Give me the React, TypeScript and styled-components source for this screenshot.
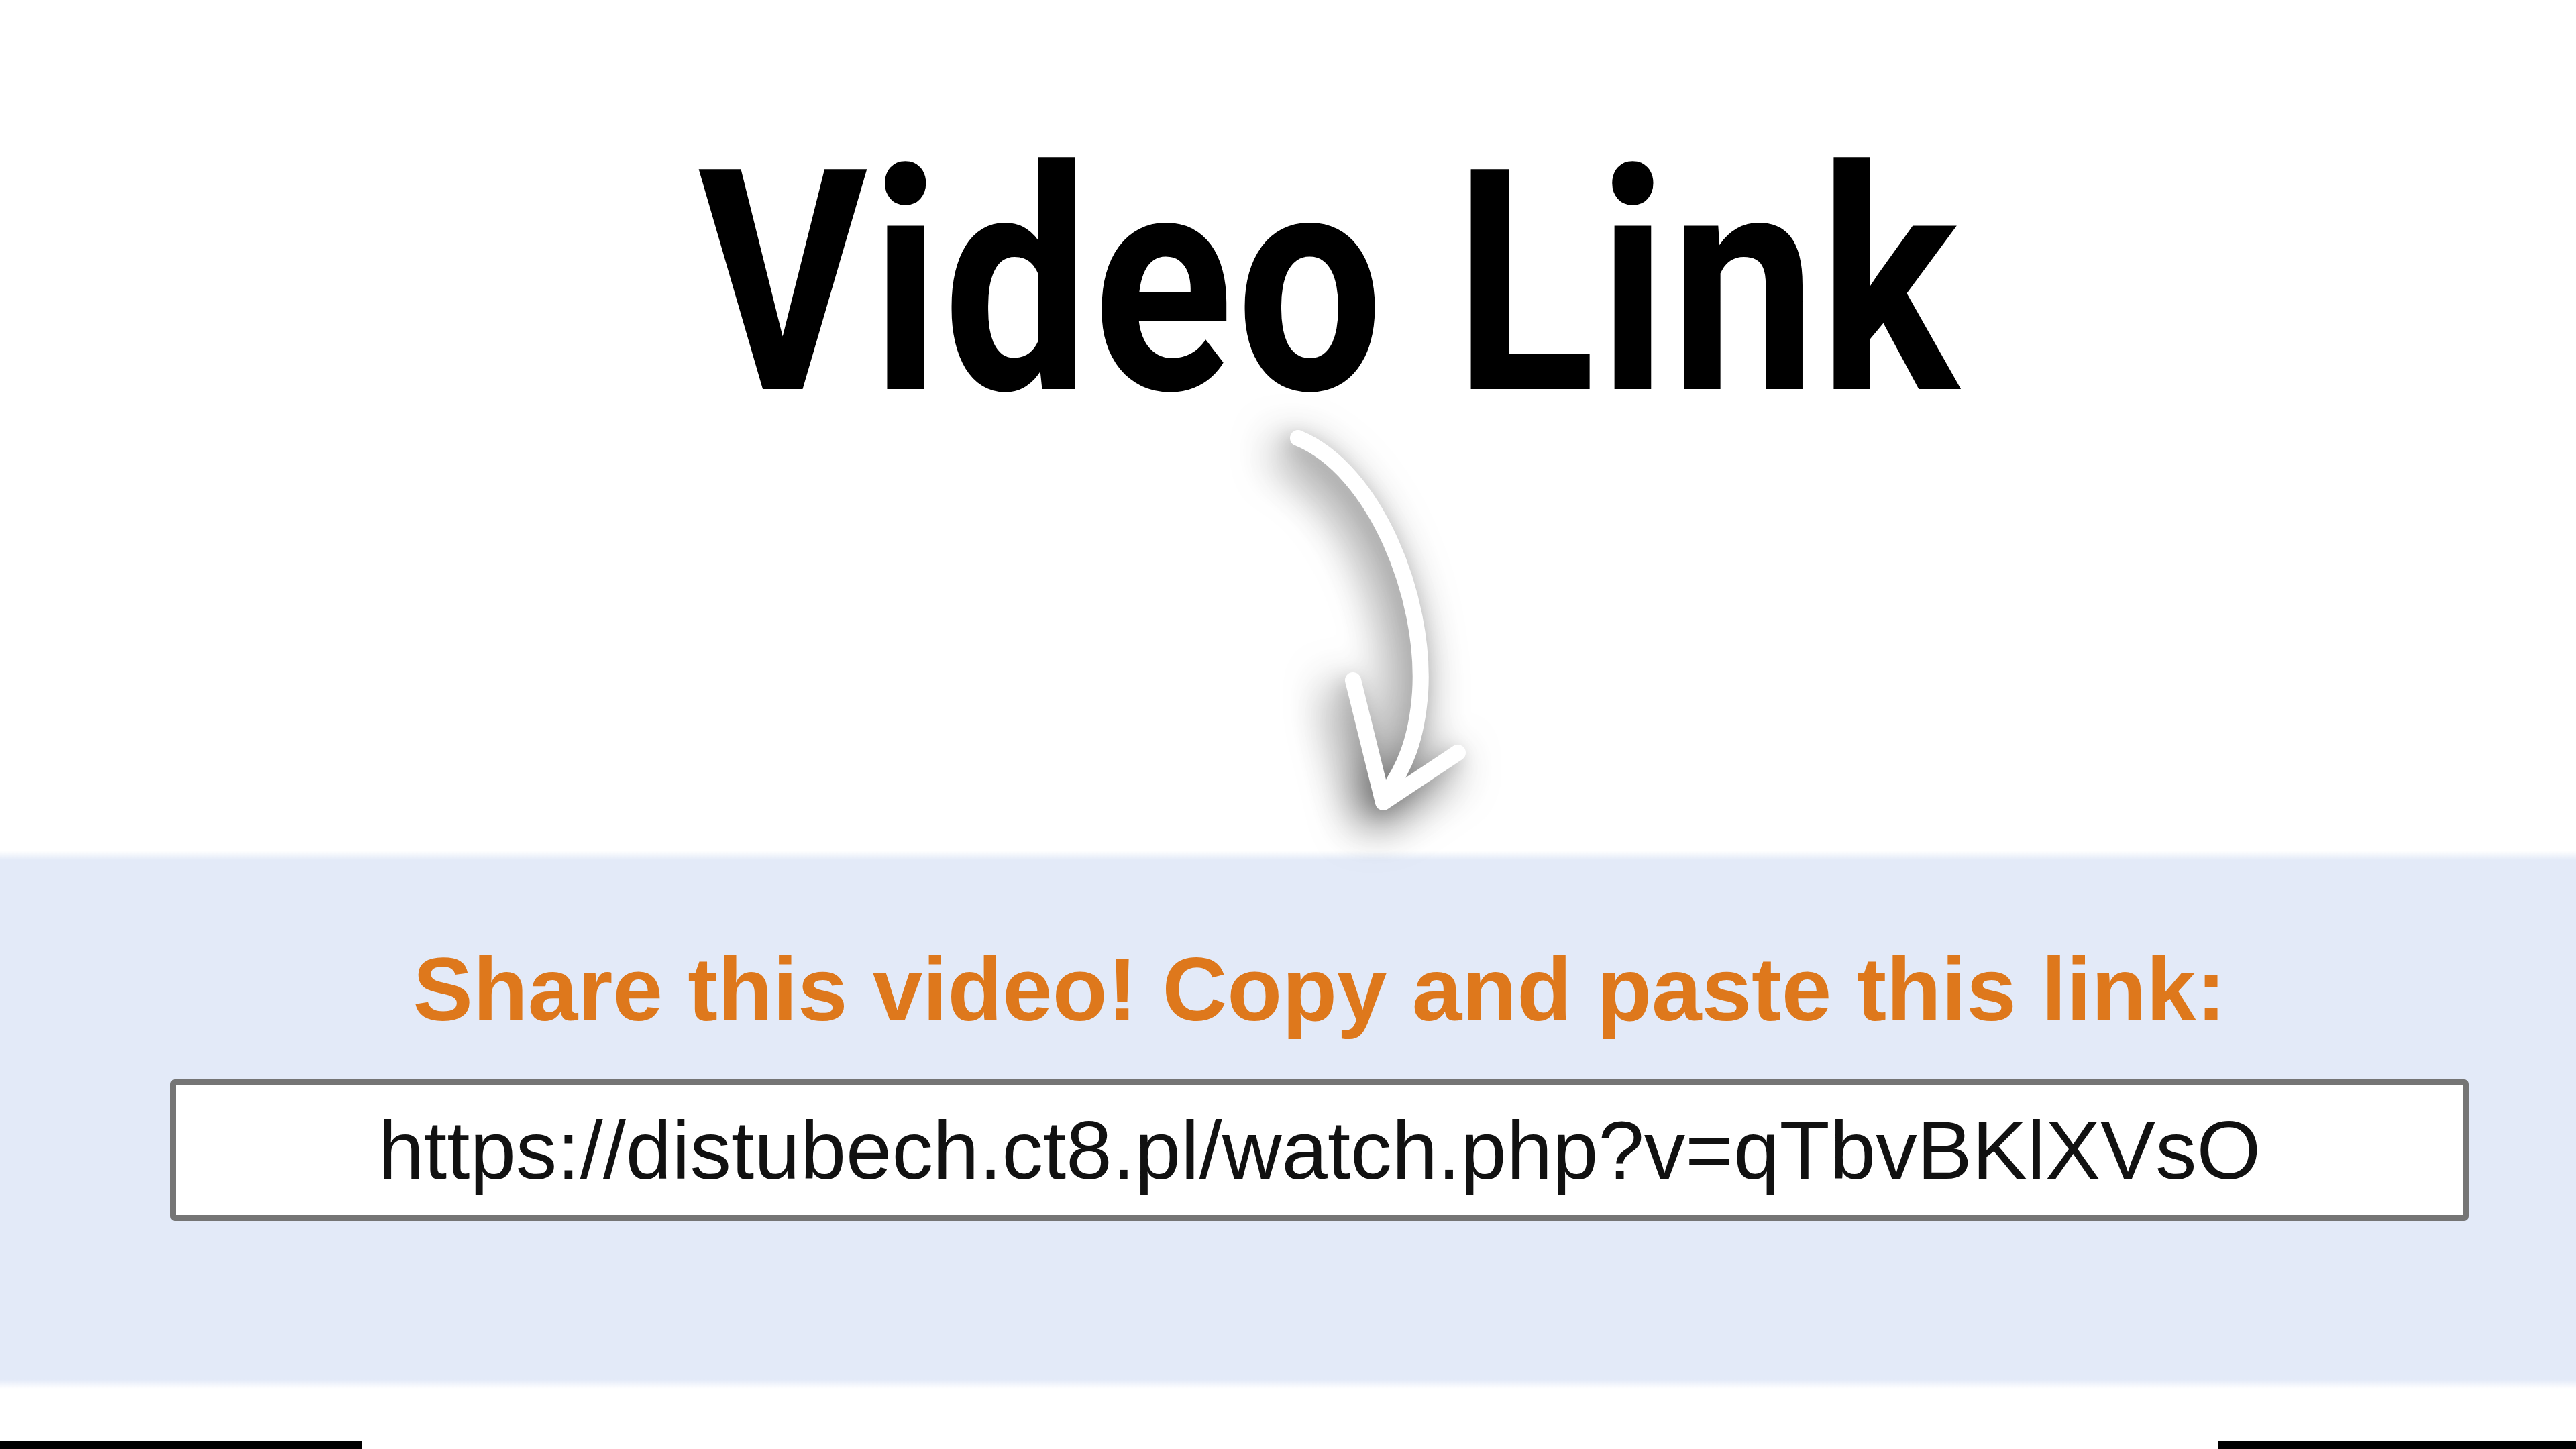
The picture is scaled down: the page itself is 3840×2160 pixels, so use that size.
import styled, { createGlobalStyle } from 'styled-components';

const GlobalStyle = createGlobalStyle`
    html, body {
        margin: 0;
        padding: 0;
        background: #ffffff;
    }
    body {
        width: 3840px;
        height: 2160px;
        overflow: hidden;
    }
`;

const panelBlue = '#e3eaf8';

export default function App() {
    return (
        <>
            <GlobalStyle />
            <Page>
                <Header>
                    <Title>Video Link</Title>
                </Header>
                <ArrowRow>
                    <CurvedArrow />
                </ArrowRow>
                <SharePanel>
                    <ShareLabel>Share this video! Copy and paste this link:</ShareLabel>
                    <LinkField>https://distubech.ct8.pl/watch.php?v=qTbvBKlXVsO</LinkField>
                </SharePanel>
                <Footer>
                    <Bar width={539} />
                    <Bar width={534} />
                </Footer>
            </Page>
        </>
    );
}

function CurvedArrow() {
    return (
        <ArrowSvg width="340" height="628" viewBox="0 0 340 628">
            <path d="M35 13 C 150 60, 226 250, 217 392 C 212 462, 194 505, 165 545" />
            <path d="M117 374 L 162 556 L 273 482" />
        </ArrowSvg>
    );
}

const Page = styled.div`
    display: flex;
    flex-direction: column;
    width: 3840px;
    height: 2160px;
`;

const Header = styled.header`
    display: flex;
    justify-content: center;
    height: 640px;
    padding: 192px 0 0 124px;
    box-sizing: border-box;
`;

const Title = styled.h1`
    display: inline-block;
    margin: 0;
    font-family: Roboto, 'Liberation Sans', sans-serif;
    font-weight: 700;
    font-size: 461px;
    line-height: 461px;
    letter-spacing: 6px;
    color: #000000;
    transform: scaleX(0.84);
    transform-origin: center;
    white-space: nowrap;
`;

const ArrowRow = styled.div`
    display: flex;
    justify-content: center;
    height: 628px;
    padding-left: 300px;
`;

const ArrowSvg = styled.svg`
    display: block;
    overflow: visible;
    filter: drop-shadow(-18px 20px 34px rgba(0, 0, 0, 0.7))
        drop-shadow(-6px 8px 14px rgba(0, 0, 0, 0.2));

    path {
        fill: none;
        stroke: #ffffff;
        stroke-width: 24;
        stroke-linecap: round;
        stroke-linejoin: round;
    }
`;

const SharePanel = styled.section`
    display: flex;
    flex-direction: column;
    align-items: center;
    height: 802px;
    box-sizing: border-box;
    padding: 130px 0 0 94px;
    background: linear-gradient(
        to bottom,
        rgba(227, 234, 248, 0) 0px,
        ${panelBlue} 14px,
        ${panelBlue} 788px,
        rgba(227, 234, 248, 0) 802px
    );
`;

const ShareLabel = styled.div`
    font-family: 'Liberation Sans', Arial, sans-serif;
    font-weight: 700;
    font-size: 134px;
    line-height: normal;
    color: #de781c;
    white-space: nowrap;
`;

const LinkField = styled.div`
    display: flex;
    align-items: center;
    justify-content: center;
    margin-top: 58px;
    width: 3426px;
    height: 211px;
    box-sizing: border-box;
    background: #ffffff;
    border: 9px solid #757575;
    border-radius: 7px;
    font-family: 'Liberation Sans', Arial, sans-serif;
    font-size: 123px;
    color: #111111;
    white-space: nowrap;
`;

const Footer = styled.footer`
    display: flex;
    justify-content: space-between;
    align-items: flex-end;
    flex: 1 1 auto;
`;

const Bar = styled.div<{ width: number }>`
    width: ${props => props.width}px;
    height: 12px;
    background: #000000;
`;
